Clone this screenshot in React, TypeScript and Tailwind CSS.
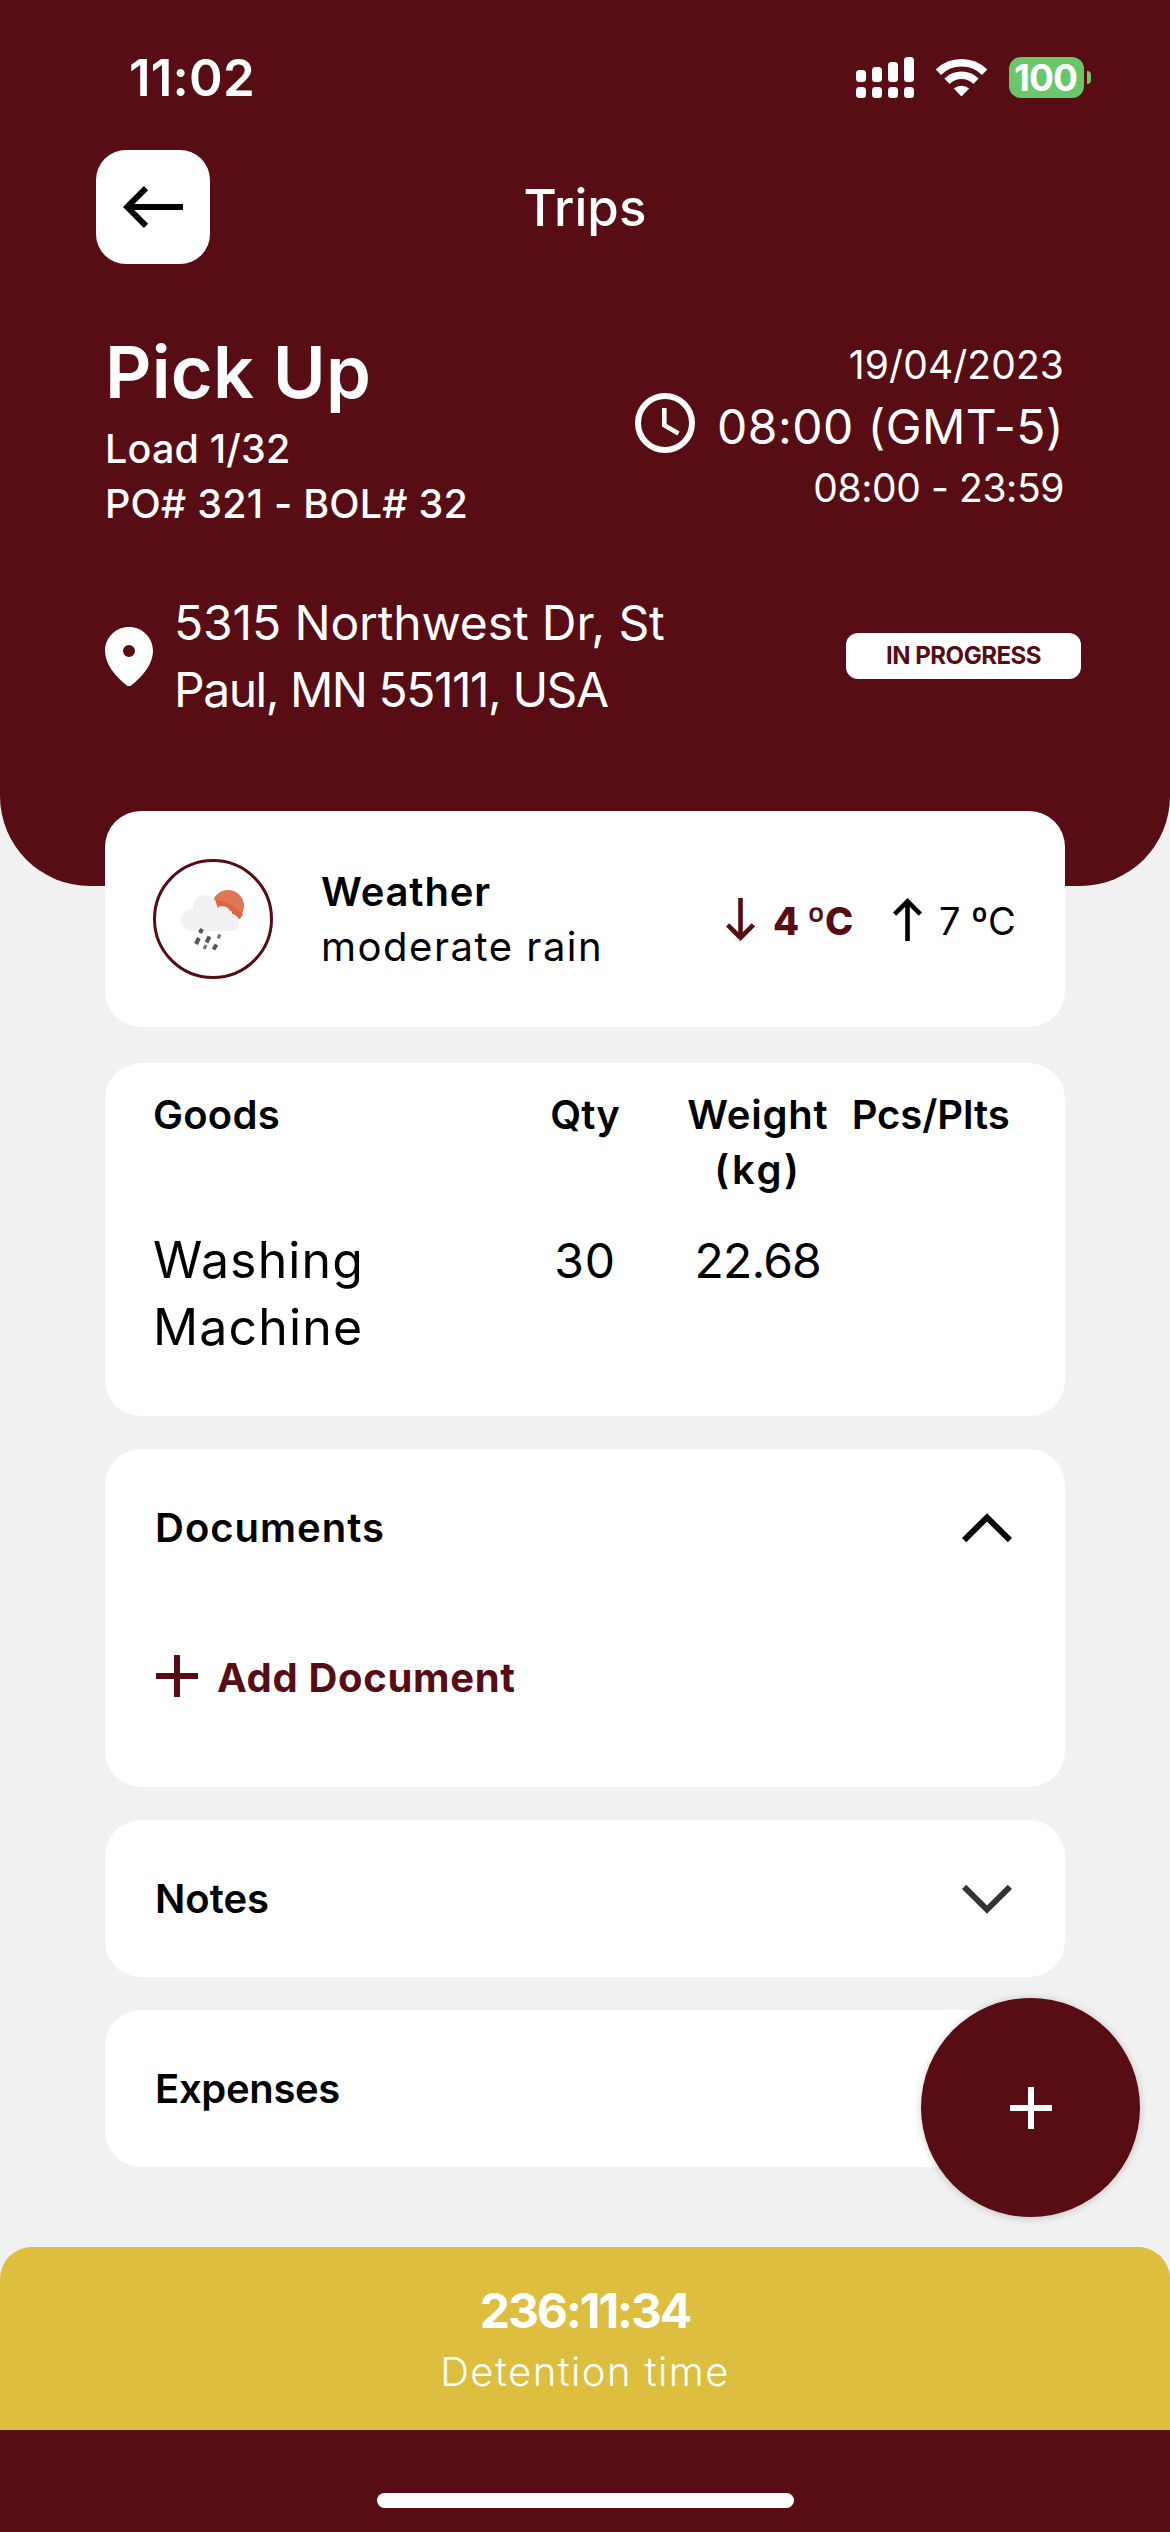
import React from "react";

const BackArrow = () => (
  <svg width="60" height="42" viewBox="0 0 60 42" fill="none" stroke="black" strokeWidth="6">
    <path d="M60 21H5" />
    <path d="M23 2.2L4.2 21L23 39.8" />
  </svg>
);

const Signal = () => (
  <svg width="58" height="41" viewBox="0 0 58 41" fill="white">
    <rect x="0" y="13" width="10" height="12" rx="3.5" />
    <rect x="16" y="10" width="10" height="15" rx="3.5" />
    <rect x="32" y="5" width="10" height="20" rx="3.5" />
    <rect x="48" y="0" width="10" height="25" rx="3.5" />
    <rect x="0" y="30" width="10" height="11" rx="3.5" />
    <rect x="16" y="30" width="10" height="11" rx="3.5" />
    <rect x="32" y="30" width="10" height="11" rx="3.5" />
    <rect x="48" y="30" width="10" height="11" rx="3.5" />
  </svg>
);

const Wifi = () => (
  <svg width="51" height="37" viewBox="0 0 51 37" fill="none" stroke="white" strokeWidth="7.5">
    <path d="M2.4 13.2A33.25 33.25 0 0 1 48.6 13.2" />
    <path d="M11 22.2A20.75 20.75 0 0 1 40 22.2" />
    <path d="M25.5 37.5L17.8 29.5A12 12 0 0 1 33.2 29.5Z" fill="white" stroke="none" />
  </svg>
);

const Clock = () => (
  <svg width="60" height="60" viewBox="0 0 60 60" fill="none" stroke="white">
    <circle cx="30" cy="30" r="27" strokeWidth="6" />
    <path d="M29.3 15V32.2L43.5 40.5" strokeWidth="4.6" />
  </svg>
);

const Pin = () => (
  <svg width="48" height="59" viewBox="0 0 48 59" fill="white" fillRule="evenodd">
    <path d="M0 24C0 10.5 10.7 0 24 0s24 10.5 24 24c0 13-10.5 25.5-21.5 34.2a4 4 0 0 1-5 0C10.5 49.5 0 37 0 24zM24 18a6 6 0 1 0 0 12a6 6 0 0 0 0-12z" />
  </svg>
);

const TempArrow = ({ className }: { className: string }) => (
  <svg
    width="29"
    height="43"
    viewBox="0 0 29 43"
    fill="none"
    stroke="currentColor"
    strokeWidth="4.6"
    className={className}
  >
    <path d="M14.5 0V39" />
    <path d="M1.6 26.8L14.5 39.7L27.4 26.8" />
  </svg>
);

const Chevron = ({ open }: { open?: boolean }) => (
  <svg
    width="50"
    height="30"
    viewBox="0 0 50 30"
    fill="none"
    strokeWidth="6"
    className={open ? "stroke-black" : "rotate-180 stroke-[#333333]"}
  >
    <path d="M2.1 27.2L25 4.4L47.9 27.2" />
  </svg>
);

const Plus = ({ className }: { className?: string }) => (
  <svg
    width="42"
    height="42"
    viewBox="0 0 42 42"
    stroke="currentColor"
    strokeWidth="6"
    className={className}
  >
    <path d="M0 21H42M21 0V42" />
  </svg>
);

const RainIcon = () => (
  <svg width="114" height="114" viewBox="3 3 114 114">
    <circle cx="75" cy="47" r="16" fill="#df7655" />
    <path d="M61 41l4 7 6-1 6 4 2 6 8 3 3-5-10-8-10-5z" fill="#de6440" />
    <g fill="#f1f1f1">
      <circle cx="52" cy="48" r="12" />
      <circle cx="39.5" cy="61" r="11" />
      <circle cx="69" cy="56.5" r="9.5" />
      <circle cx="77.5" cy="63.5" r="9" />
      <rect x="38" y="52" width="41" height="20" />
    </g>
    <g stroke="#555" strokeWidth="4">
      <path d="M49 70l-2 4M46 79l-3 6M56.5 77.5l-3 6M63.5 85.5l-3 5" />
      <path d="M67 75.5l-2 4M53 86l-2 4" strokeWidth="3" stroke="#777" />
    </g>
  </svg>
);

const Section = ({
  title,
  titleClass,
  open,
  children,
}: {
  title: string;
  titleClass: string;
  open?: boolean;
  children?: React.ReactNode;
}) => (
  <div className="mt-[33px] rounded-[36px] bg-white">
    <div className="flex h-[157px] items-center justify-between pl-[50px] pr-[53px]">
      <h3 className={titleClass}>{title}</h3>
      <Chevron open={open} />
    </div>
    {children}
  </div>
);

const App = () => {
  return (
    <div className="relative flex h-[2532px] w-[1170px] flex-col overflow-hidden bg-[#f1f1f1] font-[family-name:Inter,sans-serif] text-black">
      {/* Header */}
      <header className="h-[886px] shrink-0 rounded-b-[90px] bg-[#570d13] pt-[57px] text-white">
        {/* Status bar */}
        <div className="flex h-[41px] items-center pl-[129px] pr-[79px]">
          <span className="text-[51px] leading-none font-semibold tracking-[0.24px]">11:02</span>
          <div className="ml-auto flex items-center gap-[22px]">
            <Signal />
            <Wifi />
            <div className="flex items-center gap-[3px]">
              <div className="flex h-[41px] w-[75px] items-center justify-center rounded-[12px] bg-[#68c769] pr-[2px] text-[37px] leading-none font-bold tracking-[-0.95px]">
                100
              </div>
              <div className="h-[13px] w-[4px] rounded-r-full bg-[#68c769]" />
            </div>
          </div>
        </div>

        {/* Title row */}
        <div className="mt-[52px] grid grid-cols-[114px_1fr_114px] items-center px-[96px]">
          <button className="flex h-[114px] items-center justify-center rounded-[30px] bg-white">
            <BackArrow />
          </button>
          <h1 className="text-center text-[51px] leading-none font-medium tracking-[0.1px]">Trips</h1>
        </div>

        {/* Stop details */}
        <div className="mt-[66px] flex justify-between pl-[105px] pr-[106px]">
          <div className="whitespace-nowrap">
            <h2 className="text-[72px] leading-[84px] font-semibold tracking-[0.28px]">Pick Up</h2>
            <p className="mt-2 text-[39.5px] leading-[55px] font-medium tracking-[0.15px]">Load 1/32</p>
            <p className="text-[39.5px] leading-[55px] font-medium tracking-[0.2px]">
              PO# 321 - BOL# 32
            </p>
          </div>
          <div className="flex flex-col items-end pt-[11px] whitespace-nowrap">
            <p className="text-[39px] leading-[48px] tracking-[0.1px]">19/04/2023</p>
            <div className="mt-1 flex items-start gap-[22px]">
              <Clock />
              <p className="text-[48px] leading-[67px] tracking-[0.48px]">08:00 (GMT-5)</p>
            </div>
            <p className="text-[39px] leading-[55px] tracking-[-0.41px]">08:00 - 23:59</p>
          </div>
        </div>

        {/* Address */}
        <div className="mt-[57px] flex items-center pl-[105px] pr-[89px]">
          <Pin />
          <p className="ml-[21px] text-[48px] leading-[67px] whitespace-nowrap">
            <span className="block tracking-[-0.13px]">5315 Northwest Dr, St</span>
            <span className="block tracking-[-1.49px]">Paul, MN 55111, USA</span>
          </p>
          <span className="ml-auto flex h-[46px] w-[235px] items-center justify-center rounded-[12px] bg-white text-[24px] leading-none font-bold tracking-[-0.46px] text-[#570d13]">
            IN PROGRESS
          </span>
        </div>
      </header>

      <main className="-mt-[75px] flex-1 px-[105px]">
        {/* Weather */}
        <div className="flex h-[216px] items-center rounded-[36px] bg-white px-[48px]">
          <div className="size-[120px] rounded-full border-3 border-[#570d13]">
            <RainIcon />
          </div>
          <div className="ml-[48px] text-[40px] leading-[55px]">
            <h3 className="font-semibold tracking-[0.85px]">Weather</h3>
            <p className="tracking-[1.52px]">moderate rain</p>
          </div>
          <div className="ml-auto flex items-center text-[38px] leading-none whitespace-nowrap">
            <TempArrow className="text-[#570d13]" />
            <span className="ml-[18px] w-[80px] pt-1 font-extrabold tracking-[-0.42px] text-[#570d13]">
              4 ºC
            </span>
            <TempArrow className="ml-[40px] rotate-180" />
            <span className="ml-[17px] w-[78px] pt-1 tracking-[-0.1px]">7 ºC</span>
          </div>
        </div>

        {/* Goods */}
        <div className="mt-[36px] h-[353px] rounded-[36px] bg-white px-[48px] pt-[24px]">
          <div className="grid grid-cols-[2fr_1fr_1fr_1fr] text-center text-[40px] leading-[55px] font-semibold">
            <span className="text-left tracking-[0.26px]">Goods</span>
            <span>Qty</span>
            <span className="tracking-[0.78px]">
              Weight <span className="tracking-[2.5px]">(kg)</span>
            </span>
            <span className="tracking-[-0.08px]">Pcs/Plts</span>
          </div>
          <div className="mt-[30px] grid grid-cols-[2fr_1fr_1fr_1fr] text-center text-[48px] leading-[67px]">
            <span className="text-left text-[50px] tracking-[1.15px]">Washing Machine</span>
            <span className="tracking-[0.9px]">30</span>
            <span className="tracking-[-0.85px]">22.68</span>
          </div>
        </div>

        <Section title="Documents" titleClass="text-[40px] font-semibold tracking-[1px]" open>
          <div className="flex h-[181px] items-center pb-[37px] pl-[51px] text-[#570d13]">
            <Plus className="mb-1" />
            <span className="ml-[19px] text-[40px] leading-none font-bold tracking-[0.67px]">
              Add Document
            </span>
          </div>
        </Section>
        <Section title="Notes" titleClass="text-[40px] font-semibold" />
        <Section title="Expenses" titleClass="text-[40px] font-semibold tracking-[-0.33px]" />
      </main>

      {/* Detention timer */}
      <div className="h-[183px] shrink-0 rounded-t-[32px] bg-[#ddbe3f] pt-[30px] text-center text-white">
        <p className="text-[48px] leading-[67px] font-bold tracking-[-2.1px]">236:11:34</p>
        <p className="text-[40px] leading-[55px] font-light tracking-[1.45px]">Detention time</p>
      </div>
      <footer className="flex h-[102px] shrink-0 justify-center bg-[#570d13] pt-[63px]">
        <div className="h-[15px] w-[417px] rounded-full bg-white" />
      </footer>

      {/* Floating action button */}
      <button className="absolute right-[30px] bottom-[315px] flex size-[219px] items-center justify-center rounded-full bg-[#570d13] text-white shadow-[0_1px_8px_rgba(0,0,0,0.2)]">
        <Plus />
      </button>
    </div>
  );
};

export default App;
